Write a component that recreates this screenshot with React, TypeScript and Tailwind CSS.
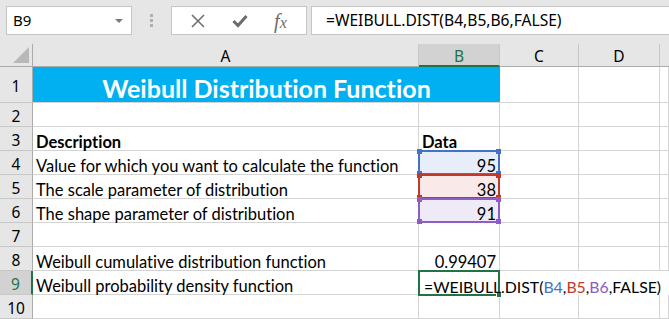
import React from 'react';

const cellFont = { fontFamily: 'Lato, "Noto Sans", sans-serif', fontVariantLigatures: 'none' as const };
const uiFont = { fontFamily: '"Noto Sans", "Open Sans", sans-serif' };

const ROW_H = ['h-[36px]', 'h-[24px]', 'h-[24px]', 'h-[24px]', 'h-[24px]', 'h-[24px]', 'h-[24px]', 'h-[24px]', 'h-[24px]', 'h-[24px]'];

const RowHead: React.FC<{ n: number; active?: boolean }> = ({ n, active }) => (
    <div
        className={`${ROW_H[n - 1]} flex items-center justify-center pt-[4px] leading-none border-b border-[#c8c8c8] text-[15.5px] ${active
            ? 'bg-[#d2d2d2] text-[#217346] border-r-2 border-r-[#217346]'
            : 'bg-[#e6e6e6] text-black border-r border-r-[#ababab]'
            }`}
        style={uiFont}
    >
        {n}
    </div>
);

const Cell: React.FC<{ children?: React.ReactNode; className?: string; h?: string }> = ({ children, className = '', h = 'h-[24px]' }) => (
    <div className={`${h} border-r border-b border-[#d4d4d4] flex items-center pt-[8px] px-[3px] whitespace-nowrap overflow-visible text-[16.5px] leading-none text-black ${className}`} style={cellFont}>
        {children}
    </div>
);

const RangeBox: React.FC<{ top: number; color: string }> = ({ top, color }) => (
    <div className="absolute left-[418px] w-[82px] h-[25px] border-2 pointer-events-none" style={{ top, borderColor: color }}>
        <span className="absolute -left-[3px] -top-[3px] w-[5px] h-[5px]" style={{ background: color }} />
        <span className="absolute -right-[3px] -top-[3px] w-[5px] h-[5px]" style={{ background: color }} />
        <span className="absolute -left-[3px] -bottom-[3px] w-[5px] h-[5px]" style={{ background: color }} />
        <span className="absolute -right-[3px] -bottom-[3px] w-[5px] h-[5px]" style={{ background: color }} />
    </div>
);

export default function App() {
    return (
        <div className="w-[669px] h-[319px] overflow-hidden bg-white flex flex-col">
            {/* formula bar */}
            <div className="h-[48px] bg-[#e6e6e6] flex items-start pt-[6px] pl-[6px]">
                <div className="w-[126px] h-[29px] bg-white border border-[#c6c6c6] flex items-center justify-between pl-[6px] pr-[8px] text-[15px] text-black" style={uiFont}>
                    <span>B9</span>
                    <span className="w-0 h-0 border-l-[4px] border-r-[4px] border-t-[4px] border-l-transparent border-r-transparent border-t-[#7a7a7a]" />
                </div>
                <div className="w-[39px] h-[29px] flex flex-col items-center justify-center gap-[2px]">
                    <span className="w-[3px] h-[3px] bg-[#b0b0b0]" />
                    <span className="w-[3px] h-[3px] bg-[#b0b0b0]" />
                    <span className="w-[3px] h-[3px] bg-[#b0b0b0]" />
                </div>
                <div className="w-[136px] h-[29px] bg-white border border-[#c6c6c6] flex items-center justify-around px-[6px]">
                    <svg width="14" height="14" viewBox="0 0 14 14">
                        <path d="M1 1 L13 13 M13 1 L1 13" stroke="#6b6b6b" strokeWidth="1.5" fill="none" />
                    </svg>
                    <svg width="16" height="14" viewBox="0 0 16 14">
                        <path d="M1.5 7 L6 11.5 L14.5 2" stroke="#6b6b6b" strokeWidth="3" fill="none" />
                    </svg>
                    <span className="text-[20px] text-[#6b6b6b] leading-none" style={{ fontFamily: '"Liberation Serif", serif' }}>
                        <i>f</i><i className="text-[16px]">x</i>
                    </span>
                </div>
                <div className="flex-1 ml-[4px] h-[29px] bg-white border border-[#c6c6c6] border-r-0 flex items-center pl-[14px] text-[15.6px] text-black" style={uiFont}>
                    =WEIBULL.DIST(B4,B5,B6,FALSE)
                </div>
            </div>

            {/* sheet */}
            <div className="relative grid grid-cols-[33px_386px_81px_79px_81px_1fr] grid-rows-[23px_36px_repeat(9,24px)]">
                {/* column headers */}
                <div className="bg-[#e6e6e6] border-r border-b border-[#ababab] relative">
                    <div className="absolute right-[3px] bottom-[3px] w-0 h-0" style={{ borderBottom: '16px solid #b8b8b8', borderLeft: '16px solid transparent' }} />
                </div>
                <div className="bg-[#e6e6e6] border-r border-b border-r-[#c8c8c8] border-b-[#ababab] flex items-center justify-center pt-[4px] leading-none text-[15.5px]" style={uiFont}>A</div>
                <div className="bg-[#d2d2d2] border-r border-r-[#c8c8c8] border-b-2 border-b-[#217346] flex items-center justify-center pt-[4px] leading-none text-[15.5px] text-[#217346]" style={uiFont}>B</div>
                <div className="bg-[#e6e6e6] border-r border-b border-r-[#c8c8c8] border-b-[#ababab] flex items-center justify-center pt-[4px] leading-none text-[15.5px]" style={uiFont}>C</div>
                <div className="bg-[#e6e6e6] border-r border-b border-r-[#c8c8c8] border-b-[#ababab] flex items-center justify-center pt-[4px] leading-none text-[15.5px]" style={uiFont}>D</div>
                <div className="bg-[#e6e6e6] border-b border-[#ababab]" />

                {/* row 1 */}
                <RowHead n={1} />
                <div className="col-span-2 h-[36px] bg-[#00b0f0] border-b border-[#d4d4d4] flex items-center justify-center pt-[8px] leading-none text-white font-bold text-[25px]" style={cellFont}>
                    Weibull Distribution Function
                </div>
                <Cell h="h-[36px]" />
                <Cell h="h-[36px]" />
                <Cell h="h-[36px]" />

                {/* row 2 */}
                <RowHead n={2} />
                <Cell /><Cell /><Cell /><Cell /><Cell />

                {/* row 3 */}
                <RowHead n={3} />
                <Cell className="font-bold">Description</Cell>
                <Cell className="font-bold">Data</Cell>
                <Cell /><Cell /><Cell />

                {/* row 4 */}
                <RowHead n={4} />
                <Cell>Value for which you want to calculate the function</Cell>
                <Cell className="justify-end bg-[#e8eef9]">95</Cell>
                <Cell /><Cell /><Cell />

                {/* row 5 */}
                <RowHead n={5} />
                <Cell>The scale parameter of distribution</Cell>
                <Cell className="justify-end bg-[#f9e9e9]">38</Cell>
                <Cell /><Cell /><Cell />

                {/* row 6 */}
                <RowHead n={6} />
                <Cell>The shape parameter of distribution</Cell>
                <Cell className="justify-end bg-[#efebf6]">91</Cell>
                <Cell /><Cell /><Cell />

                {/* row 7 */}
                <RowHead n={7} />
                <Cell /><Cell /><Cell /><Cell /><Cell />

                {/* row 8 */}
                <RowHead n={8} />
                <Cell>Weibull cumulative distribution function</Cell>
                <Cell className="justify-end">0.99407</Cell>
                <Cell /><Cell /><Cell />

                {/* row 9 */}
                <RowHead n={9} active />
                <Cell>Weibull probability density function</Cell>
                <div className="h-[24px] col-span-4 flex items-center pt-[8px] leading-none pl-[5px] whitespace-nowrap text-[15.8px] text-black relative z-10" style={cellFont}>
                    =WEIBULL.DIST(<span className="text-[#4472c4]">B4</span>,<span className="text-[#c0392b]">B5</span>,<span className="text-[#8e5cc2]">B6</span>,FALSE)
                </div>

                {/* row 10 */}
                <RowHead n={10} />
                <Cell /><Cell /><Cell /><Cell /><Cell />

                {/* range highlight boxes */}
                <RangeBox top={106} color="#4472c4" />
                <RangeBox top={130} color="#c0392b" />
                <RangeBox top={154} color="#8e5cc2" />

                {/* active cell */}
                <div className="absolute left-[418px] top-[226px] w-[82px] h-[26px] border-2 border-[#217346] pointer-events-none">
                    <div className="absolute right-[-4px] bottom-[-4px] w-[6px] h-[6px] bg-[#217346] border border-white" />
                </div>
            </div>
        </div>
    );
}
